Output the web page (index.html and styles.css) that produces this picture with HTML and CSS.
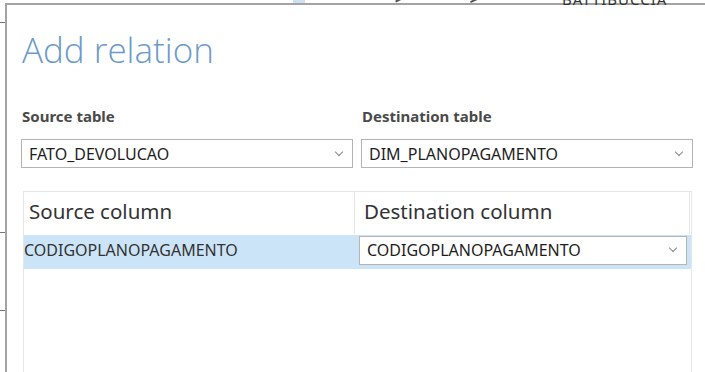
FILE: index.html
```html
<!DOCTYPE html>
<html lang="en">
<head>
    <meta charset="UTF-8">
    <title>Add relation</title>
    <link rel="stylesheet" href="styles.css">
</head>
<body>

    <div class="desktop">
        <span class="frag frag-blue"></span>
        <span class="frag frag-line1"></span>
        <span class="frag frag-line2"></span>
        <span class="frag-text">BATTIBUCCIA</span>
        <span class="frag frag-left1"></span>
        <span class="frag frag-left2"></span>
        <span class="frag frag-left3"></span>

        <div class="dialog">
            <h1 class="title">Add relation</h1>

            <div class="pickers">
                <div class="picker">
                    <label class="label">Source table</label>
                    <div class="select">
                        <span>FATO_DEVOLUCAO</span>
                        <span class="chevron"></span>
                    </div>
                </div>
                <div class="picker">
                    <label class="label">Destination table</label>
                    <div class="select">
                        <span>DIM_PLANOPAGAMENTO</span>
                        <span class="chevron"></span>
                    </div>
                </div>
            </div>

            <div class="grid">
                <div class="grid-head">
                    <div class="cell">Source column</div>
                    <div class="cell">Destination column</div>
                </div>
                <div class="grid-row selected">
                    <div class="cell">CODIGOPLANOPAGAMENTO</div>
                    <div class="cell">
                        <div class="select small">
                            <span>CODIGOPLANOPAGAMENTO</span>
                            <span class="chevron"></span>
                        </div>
                    </div>
                </div>
            </div>
        </div>
    </div>

</body>
</html>
```

FILE: styles.css
```css
body {
    margin: 0;
    background: #fff;
    font-family: "Noto Sans", "Open Sans", sans-serif;
    overflow: hidden;
}
.desktop {
    position: relative;
    width: 705px;
    height: 372px;
    overflow: hidden;
    padding: 3px 0 0 5px;
    box-sizing: border-box;
}
.frag {
    position: absolute;
    display: block;
}
.frag-blue {
    left: 293px;
    top: 0;
    width: 12px;
    height: 3px;
    background: #cfe0f0;
}
.frag-line1 {
    left: 395px;
    top: -2px;
    width: 12px;
    height: 2px;
    background: #555;
    transform: rotate(-25deg);
}
.frag-line2 {
    left: 470px;
    top: -1px;
    width: 10px;
    height: 2px;
    background: #555;
    transform: rotate(-25deg);
}
.frag-text {
    position: absolute;
    left: 562px;
    top: -11px;
    font-size: 15px;
    color: #333;
    letter-spacing: 1px;
}
.frag-left1,
.frag-left2,
.frag-left3 {
    left: 0;
    width: 5px;
    height: 1px;
    background: #777;
}
.frag-left1 { top: 22px; }
.frag-left2 { top: 232px; }
.frag-left3 { top: 310px; }
.dialog {
    width: 740px;
    height: 400px;
    background: #fff;
    border-top: 2px solid #a3a3a3;
    border-left: 2px solid #a3a3a3;
    padding: 0 0 0 14px;
    box-sizing: border-box;
}
.title {
    margin: 21px 0 0 1px;
    font-family: "Open Sans", sans-serif;
    font-weight: 300;
    font-size: 35px;
    line-height: 48px;
    color: #6b9acb;
}
.pickers {
    display: grid;
    grid-template-columns: 332px 332px;
    column-gap: 8px;
    margin-top: 32px;
}
.label {
    display: block;
    font-size: 15px;
    font-weight: bold;
    color: #4a4a4a;
    margin: 0 0 13px 1px;
    line-height: 20px;
}
.select {
    display: flex;
    align-items: center;
    justify-content: space-between;
    height: 29px;
    box-sizing: border-box;
    border: 1px solid #b4b4b4;
    background: #fff;
    padding: 0 10px 0 7px;
    font-size: 16px;
    color: #1e1e1e;
}
.chevron {
    width: 5px;
    height: 5px;
    border-right: 1.5px solid #888;
    border-bottom: 1.5px solid #888;
    transform: rotate(45deg);
    margin-top: -4px;
}
.grid {
    margin: 23px 0 0 2px;
    width: 667px;
    border: 1px solid #e6e6e6;
    border-bottom: none;
    height: 200px;
}
.grid-head,
.grid-row {
    display: grid;
    grid-template-columns: 331px 335px;
}
.grid-head {
    height: 42px;
}
.grid-head .cell {
    font-size: 20.5px;
    line-height: 28px;
    color: #333;
    padding: 5px 0 0 5px;
    border-right: 1px solid #e6e6e6;
}
.grid-head .cell + .cell {
    padding-left: 9px;
}
.grid-row {
    height: 34px;
    margin-top: 1px;
}
.grid-row .cell {
    font-size: 16px;
    color: #333;
    display: flex;
    align-items: center;
}
.selected {
    background: #cce4f7;
}
.selected .cell:first-child {
    padding: 0 0 4px 0;
}
.select.small {
    width: 328px;
    margin: -4px 0 0 4px;
}
```
